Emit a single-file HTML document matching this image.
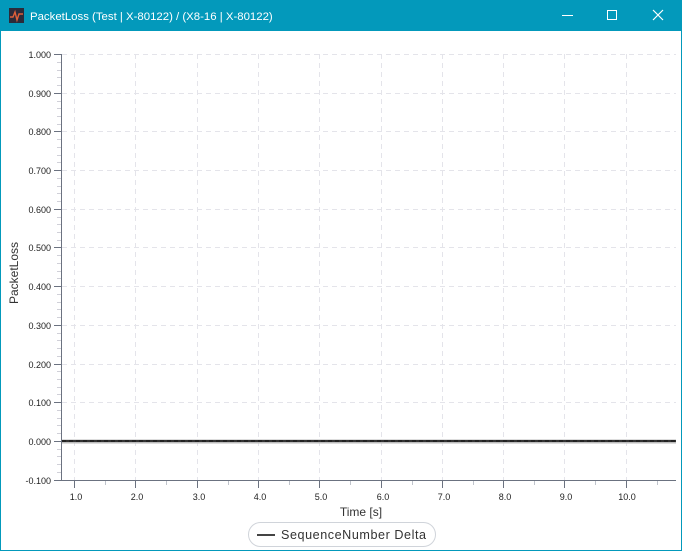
<!DOCTYPE html><html><head><style>
body{margin:0;width:682px;height:552px;overflow:hidden;font-family:"Liberation Sans",sans-serif;background:#fff}
.win{position:absolute;left:0;top:0;width:680px;height:550px;border:1px solid #0399bb;border-top:none}
.tb{position:absolute;left:0;top:0;width:682px;height:31px;background:#0399bb;color:#fff;font-size:12.5px}
</style></head><body>
<div class="win"></div>
<div class="tb">
<svg width="682" height="31" style="position:absolute;left:0;top:0">
<rect x="9" y="8" width="15" height="15" fill="#2b2b3a"/>
<path d="M10 17 L13 17 L15 12 L17 20 L19 14 L23 14" stroke="#e0603a" stroke-width="1.4" fill="none"/>
<line x1="562" y1="15.5" x2="573" y2="15.5" stroke="#fff"/>
<rect x="607.5" y="10.5" width="9" height="9" fill="none" stroke="#fff"/>
<path d="M653 10 L663 20 M663 10 L653 20" stroke="#fff" stroke-width="1.2"/>
<text x="30" y="20" fill="#fff" font-size="11.4" font-family="Liberation Sans,sans-serif">PacketLoss (Test | X-80122) / (X8-16 | X-80122)</text>
</svg></div>
<svg width="682" height="552" style="position:absolute;left:0;top:0;pointer-events:none" font-family="Liberation Sans,sans-serif">
<g stroke="#e4e4ea" stroke-dasharray="5,4">
<line x1="62" x2="676" y1="54.5" y2="54.5"/><line x1="62" x2="676" y1="93.5" y2="93.5"/><line x1="62" x2="676" y1="131.5" y2="131.5"/><line x1="62" x2="676" y1="170.5" y2="170.5"/><line x1="62" x2="676" y1="209.5" y2="209.5"/><line x1="62" x2="676" y1="247.5" y2="247.5"/><line x1="62" x2="676" y1="286.5" y2="286.5"/><line x1="62" x2="676" y1="325.5" y2="325.5"/><line x1="62" x2="676" y1="364.5" y2="364.5"/><line x1="62" x2="676" y1="402.5" y2="402.5"/>
<line y1="54" y2="480" x1="74.5" x2="74.5"/><line y1="54" y2="480" x1="135.5" x2="135.5"/><line y1="54" y2="480" x1="197.5" x2="197.5"/><line y1="54" y2="480" x1="258.5" x2="258.5"/><line y1="54" y2="480" x1="319.5" x2="319.5"/><line y1="54" y2="480" x1="381.5" x2="381.5"/><line y1="54" y2="480" x1="442.5" x2="442.5"/><line y1="54" y2="480" x1="503.5" x2="503.5"/><line y1="54" y2="480" x1="564.5" x2="564.5"/><line y1="54" y2="480" x1="626.5" x2="626.5"/>
</g>
<g stroke="#d0d0d8">
<path d="M57 62.5h4M57 70.5h4M57 77.5h4M57 85.5h4M57 101.5h4M57 108.5h4M57 116.5h4M57 124.5h4M57 139.5h4M57 147.5h4M57 155.5h4M57 162.5h4M57 178.5h4M57 186.5h4M57 193.5h4M57 201.5h4M57 217.5h4M57 224.5h4M57 232.5h4M57 240.5h4M57 255.5h4M57 263.5h4M57 271.5h4M57 278.5h4M57 294.5h4M57 302.5h4M57 309.5h4M57 317.5h4M57 333.5h4M57 340.5h4M57 348.5h4M57 356.5h4M57 371.5h4M57 379.5h4M57 387.5h4M57 394.5h4M57 410.5h4M57 418.5h4M57 425.5h4M57 433.5h4M57 449.5h4M57 456.5h4M57 464.5h4M57 472.5h4"/>
</g>
<g stroke="#6b7280">
<line x1="61.5" y1="54" x2="61.5" y2="481"/><line x1="61" y1="480.5" x2="676" y2="480.5"/>
<path d="M54 54.5h7M54 93.5h7M54 131.5h7M54 170.5h7M54 209.5h7M54 247.5h7M54 286.5h7M54 325.5h7M54 364.5h7M54 402.5h7M54 441.5h7M54 480.5h7"/>
<path d="M74.5 481v7M135.5 481v7M197.5 481v7M258.5 481v7M319.5 481v7M381.5 481v7M442.5 481v7M503.5 481v7M564.5 481v7M626.5 481v7"/>
</g>
<g stroke="#c0c4cc"><path d="M105.5 481v4M166.5 481v4M228.5 481v4M289.5 481v4M350.5 481v4M412.5 481v4M473.5 481v4M534.5 481v4M595.5 481v4M657.5 481v4"/></g>
<line x1="62" x2="676" y1="441.5" y2="441.5" stroke="#bbb" stroke-width="4"/>
<line x1="62" x2="676" y1="441" y2="441" stroke="#333" stroke-width="2"/>
<line x1="62" x2="676" y1="441" y2="441" stroke="#111" stroke-width="1" stroke-dasharray="4,3"/>
<g font-size="9" fill="#222" text-anchor="end">
<text x="51" y="58">1.000</text><text x="51" y="97">0.900</text><text x="51" y="135">0.800</text><text x="51" y="174">0.700</text><text x="51" y="213">0.600</text><text x="51" y="251">0.500</text><text x="51" y="290">0.400</text><text x="51" y="329">0.300</text><text x="51" y="368">0.200</text><text x="51" y="406">0.100</text><text x="51" y="445">0.000</text><text x="51" y="484">-0.100</text>
</g>
<g font-size="9" fill="#222" text-anchor="middle">
<text x="76" y="500">1.0</text><text x="137" y="500">2.0</text><text x="199" y="500">3.0</text><text x="260" y="500">4.0</text><text x="321" y="500">5.0</text><text x="383" y="500">6.0</text><text x="444" y="500">7.0</text><text x="505" y="500">8.0</text><text x="566" y="500">9.0</text><text x="627" y="500">10.0</text>
</g>
<text x="361" y="516" font-size="12" fill="#333" text-anchor="middle">Time [s]</text>
<text transform="translate(18,273) rotate(-90)" font-size="12" fill="#333" text-anchor="middle">PacketLoss</text>
<rect x="248.5" y="522.5" width="187" height="24" rx="12" fill="#fff" stroke="#d0d4da"/>
<line x1="257" x2="275" y1="535" y2="535" stroke="#444" stroke-width="2"/>
<text x="281" y="539" font-size="12.6" fill="#333" textLength="145">SequenceNumber Delta</text>
</svg>
</body></html>
